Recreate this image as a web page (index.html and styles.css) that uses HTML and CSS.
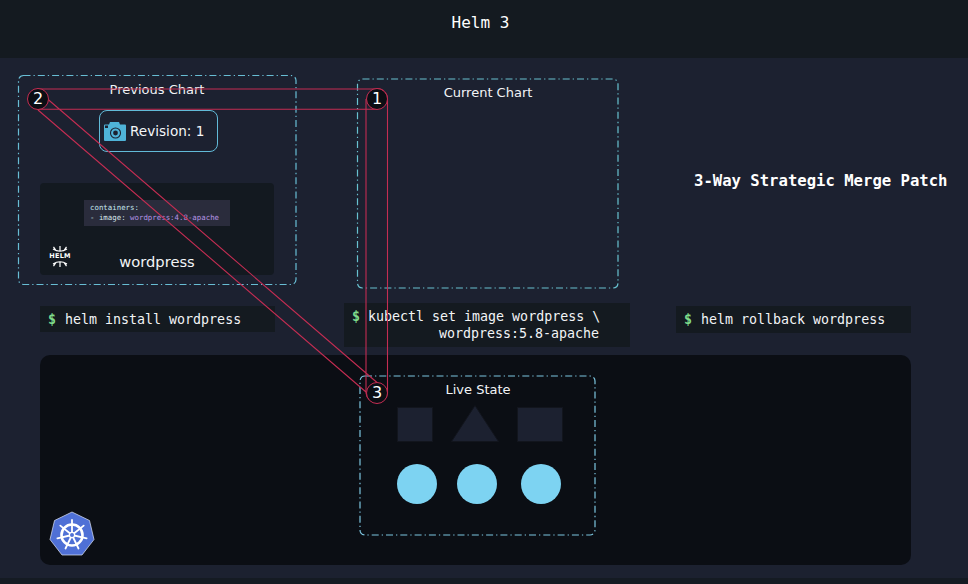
FILE: index.html
```html
<!DOCTYPE html>
<html lang="en">
<head>
<meta charset="utf-8">
<title>Helm 3</title>
<link rel="stylesheet" href="styles.css">
</head>
<body>
<header class="header">Helm 3</header>
<main class="scene">
  <section class="live-panel"></section>

  <svg class="layer" viewBox="0 58 968 520" aria-hidden="true">
    <rect class="dash dash-prev" x="18.500" y="75.500" width="277.500" height="209" rx="5"/>
    <rect class="dash dash-cur" x="357.500" y="79" width="260.500" height="209" rx="5"/>
    <rect class="dash dash-live" x="360" y="376" width="235" height="159" rx="5"/>
  </svg>

  <div class="label label-prev">Previous Chart</div>
  <div class="label label-cur">Current Chart</div>
  <div class="label label-live">Live State</div>

  <div class="revision">
    <svg class="camera" viewBox="0 0 22 19" aria-hidden="true">
      <path class="cam-body" d="M1 2.500H5L6 0H15L16 2.500H21A1 1 0 0 1 22 3.500V18A1 1 0 0 1 21 19H1A1 1 0 0 1 0 18V3.500A1 1 0 0 1 1 2.500Z"/>
      <rect class="cam-flash" x="1" y="3.500" width="3" height="2.500"/>
      <circle class="cam-ring" cx="11.500" cy="11" r="5"/>
      <circle class="cam-lens" cx="11.500" cy="11" r="2.400"/>
    </svg>
    <span>Revision: 1</span>
  </div>

  <section class="chart">
    <pre class="yaml"><span class="y-key">containers:</span>
<span class="y-dash">- image:</span> <span class="y-val">wordpress:4.8-apache</span></pre>
    <div class="chart-foot">
      <div class="helm-logo">
        <svg viewBox="0 0 20 8" aria-hidden="true">
          <path d="M3 4Q10 8.500 17 4M10 6.200V1M6 5.500L3.500 1.800M14 5.500L16.500 1.800"/>
        </svg>
        <span>HELM</span>
        <svg viewBox="0 0 20 8" aria-hidden="true">
          <path d="M3 4Q10 -0.500 17 4M10 1.800V7M6 2.500L3.500 6.200M14 2.500L16.500 6.200"/>
        </svg>
      </div>
      <div class="chart-name">wordpress</div>
    </div>
  </section>

  <pre class="cmd cmd-install"><span class="prompt">$</span> helm install wordpress</pre>
  <div class="cmd cmd-set">
    <pre class="cmd-line"><span class="prompt prompt-tight">$</span> kubectl set image wordpress \</pre>
    <pre class="cmd-line cmd-cont">wordpress:5.8-apache</pre>
  </div>
  <pre class="cmd cmd-rollback"><span class="prompt">$</span> helm rollback wordpress</pre>

  <h2 class="strategy">3-Way Strategic Merge Patch</h2>

  <div class="shape square"></div>
  <svg class="shape triangle" viewBox="0 0 48 37" aria-hidden="true"><path d="M24 0.500L47.500 36.500H0.500Z"/></svg>
  <div class="shape rectangle"></div>
  <div class="pod pod-a"></div>
  <div class="pod pod-b"></div>
  <div class="pod pod-c"></div>

  <svg class="k8s" viewBox="0 0 46 46" aria-hidden="true">
    <path class="k8s-hept" d="M23 1L40.500 9.500L45 28.500L33 44H13L1 28.500L5.500 9.500Z"/>
    <circle class="k8s-wheel" cx="23" cy="24" r="10.500"/>
    <path class="k8s-spokes" d="M23 24L23 9M23 24L34.700 14.600M23 24L37.600 27.300M23 24L29.500 37.500M23 24L16.500 37.500M23 24L8.400 27.300M23 24L11.300 14.600"/>
    <circle class="k8s-hub" cx="23" cy="24" r="2.600"/>
  </svg>

  <svg class="layer" viewBox="0 58 968 520" aria-hidden="true">
    <path class="tangent" d="M37 89H377M37 109.300H377M366 99V393M387.500 99V393M38 110L366 392M48.700 100L377 382.500"/>
    <path class="tangent" d="M377 88.500A10.500 10.500 0 0 1 387.500 99M366 393A10.800 10.800 0 0 0 387.500 393"/>
  </svg>

  <div class="step step-2">2</div>
  <div class="step step-1">1</div>
  <div class="step step-3">3</div>
</main>
<footer class="footer"></footer>
</body>
</html>
```
FILE: styles.css
```css
* { box-sizing: border-box; }
html, body { margin: 0; height: 100%; }
body {
  display: flex;
  flex-direction: column;
  width: 968px;
  height: 584px;
  overflow: hidden;
  background: #1c2130;
  color: #fff;
  font-family: "DejaVu Sans", sans-serif;
}
.header {
  flex: 0 0 58px;
  height: 58px;
  padding-top: 13px;
  padding-right: 7px;
  background: #141a20;
  text-align: center;
  font: 16px/20px "DejaVu Sans Mono", monospace;
}
.footer { flex: 0 0 6px; background: #151b23; }
.scene { position: relative; flex: 1; }
.layer { position: absolute; left: 0; top: 0; width: 968px; height: 520px; pointer-events: none; }
.live-panel {
  position: absolute; left: 40px; top: 297px; width: 871px; height: 210px;
  background: #0b0e14; border-radius: 10px;
}
.dash { fill: none; stroke-width: 1.200; stroke-dasharray: 7 3 1.300 3; }
.dash-prev { stroke: #68bdd4; }
.dash-cur { stroke: #68c2d0; }
.dash-live { stroke: #7cc6e0; }
.label { position: absolute; font-size: 13px; line-height: 16px; text-align: center; color: #f2f4f6; }
.label-prev { left: 97px; top: 24px; width: 120px; }
.label-cur { left: 428px; top: 27px; width: 120px; }
.label-live { left: 418px; top: 324px; width: 120px; }

.revision {
  position: absolute; left: 99px; top: 52px; width: 119px; height: 42px;
  display: flex; align-items: center; gap: 4px; padding-left: 4px;
  border: 1.300px solid #62bad8; border-radius: 8px;
  font-size: 13.600px; color: #f4f6f8;
}
.camera { width: 22px; height: 19px; flex: none; }
.cam-body { fill: #4fb3d8; }
.cam-flash { fill: #1c2130; }
.cam-ring { fill: #4fb3d8; stroke: #1c2130; stroke-width: 1.100; }
.cam-lens { fill: #1c2130; }

.chart {
  position: absolute; left: 40px; top: 125px; width: 234px; height: 92px;
  display: flex; flex-direction: column; padding-top: 17px;
  background: #131920; border-radius: 4px;
}
.yaml {
  margin: 0 0 0 44px; width: 146px; height: 26px; padding: 3px 6px;
  background: #2a2c3c;
  font: 7.400px/10px "DejaVu Sans Mono", monospace;
}
.y-key { color: #c5e6ee; }
.y-dash { color: #d5e3e8; }
.y-val { color: #b594e6; }
.chart-foot { position: relative; flex: 1; display: flex; align-items: flex-end; justify-content: center; padding-bottom: 4px; }
.chart-name { font-size: 14.700px; line-height: 18px; color: #f2f4f6; }
.helm-logo {
  position: absolute; left: 10px; bottom: 7px; width: 20px;
  display: flex; flex-direction: column; align-items: center;
  font: bold 6.500px/7px "DejaVu Sans", sans-serif; letter-spacing: 0.300px;
}
.helm-logo svg { display: block; width: 20px; height: 8px; }
.helm-logo path { fill: none; stroke: #fff; stroke-width: 1.200; }

.cmd {
  position: absolute; margin: 0; padding-left: 8px;
  background: #141a20; color: #f2f4f6;
  font: 13.300px/19px "DejaVu Sans Mono", monospace;
}
.prompt { color: #7fdc8c; font-weight: bold; margin-right: 1px; }
.prompt-tight { margin-right: 0; }
.cmd-install { left: 40px; top: 248px; width: 235px; height: 26px; padding-top: 4px; }
.cmd-set { left: 344px; top: 245px; width: 286px; height: 44px; padding-top: 5px; }
.cmd-line { margin: 0; font: 13.300px/17px "DejaVu Sans Mono", monospace; }
.cmd-cont { padding-left: 87px; }
.cmd-rollback { left: 676px; top: 248px; width: 235px; height: 27px; padding-top: 4px; }

.strategy {
  position: absolute; left: 694px; top: 113px; margin: 0;
  font: bold 15.600px/20px "DejaVu Sans Mono", monospace; white-space: nowrap;
}

.shape { position: absolute; }
.square, .rectangle { background: #1c2130; border: 1px solid #12151d; }
.square { left: 397px; top: 349px; width: 36px; height: 35px; }
.rectangle { left: 517px; top: 349px; width: 46px; height: 35px; }
.triangle { left: 451px; top: 347px; width: 48px; height: 37px; }
.triangle path { fill: #1c2130; stroke: #12151d; }
.pod { position: absolute; top: 406px; width: 40px; height: 40px; border-radius: 50%; background: #7dd3f2; }
.pod-a { left: 397px; }
.pod-b { left: 457px; }
.pod-c { left: 521px; }

.k8s { position: absolute; left: 49px; top: 453px; width: 46px; height: 46px; }
.k8s-hept { fill: #4f70d6; stroke: #dfe5f5; stroke-width: 0.700; stroke-linejoin: round; }
.k8s-wheel { fill: none; stroke: #fff; stroke-width: 2.600; }
.k8s-spokes { fill: none; stroke: #fff; stroke-width: 1.800; stroke-linecap: round; }
.k8s-hub { fill: #4f70d6; stroke: #fff; stroke-width: 1.200; }

.tangent { fill: none; stroke: #c42d52; stroke-width: 1.100; }
.step {
  position: absolute; width: 22px; height: 22px;
  display: flex; align-items: center; justify-content: center;
  background: #0b0e14; border: 1.400px solid #c42d52; border-radius: 50%;
  font-size: 16px; line-height: 1; color: #fff;
}
.step-2 { left: 27px; top: 30px; }
.step-1 { left: 366px; top: 30px; }
.step-3 { left: 366px; top: 324px; }
```
